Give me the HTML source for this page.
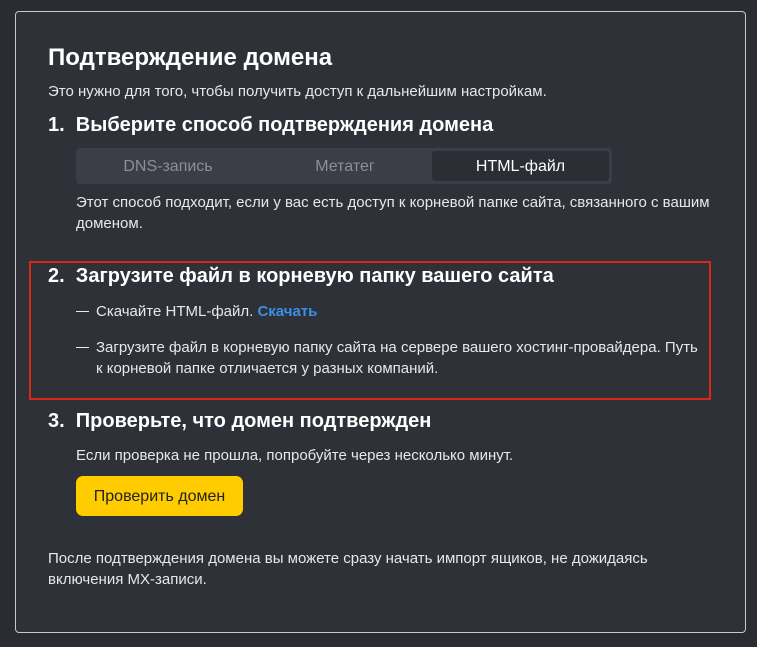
<!DOCTYPE html>
<html><head><meta charset="utf-8"><style>
*{margin:0;padding:0;box-sizing:border-box}
body{width:757px;height:647px;background:#2a2c31;font-family:"Liberation Sans",sans-serif;color:#fff;position:relative;overflow:hidden}
.card{position:absolute;left:15px;top:11px;width:731px;height:622px;border:1px solid #c8c9cc;border-radius:4px;background:#2f3138}
.a{position:absolute;white-space:nowrap}
.h1{font-size:24px;font-weight:bold}
.h2{font-size:20px;font-weight:bold}
.t{font-size:15px;color:#e8e8ea;line-height:21px}
.seg{position:absolute;left:76px;top:148px;width:536px;height:36px;background:#3b3e46;border-radius:4px}
.seg div{position:absolute;top:0;height:36px;line-height:37px;font-size:16px;color:#8c8f96;text-align:center}
.act{left:356px!important;top:3px!important;width:177px;height:30px!important;line-height:31px!important;background:#2c2e35;border-radius:3px;color:#fff!important}
.red{position:absolute;left:29px;top:261px;width:682px;height:139px;border:2px solid #d8281b}
.btn{position:absolute;left:76px;top:476px;width:167px;height:40px;background:#fc0;border-radius:7px;color:#222;font-size:16px;text-align:center;line-height:41px}
.d{display:inline-block;width:13px;height:1px;background:#e8e8ea;vertical-align:middle;margin-right:7px;position:relative;top:-1px}
</style></head><body>
<div class="card"></div>
<div class="a h1" style="left:48px;top:44px">Подтверждение домена</div>
<div class="a t" style="left:48px;top:81px">Это нужно для того, чтобы получить доступ к дальнейшим настройкам.</div>
<div class="a h2" style="left:48px;top:114px">1.&nbsp; Выберите способ подтверждения домена</div>
<div class="seg"><div style="left:0;width:184px">DNS-запись</div><div style="left:184px;width:170px">Метатег</div><div class="act">HTML-файл</div></div>
<div class="a t" style="left:76px;top:192px">Этот способ подходит, если у вас есть доступ к корневой папке сайта, связанного с вашим<br>доменом.</div>
<div class="red"></div>
<div class="a h2" style="left:48px;top:265px">2.&nbsp; Загрузите файл в корневую папку вашего сайта</div>
<div class="a t" style="left:76px;top:301px"><span class="d"></span>Скачайте HTML-файл. <span style="color:#3b8fe6;font-weight:bold">Скачать</span></div>
<div class="a t" style="left:76px;top:337px"><span class="d"></span></div>
<div class="a t" style="left:96px;top:337px">Загрузите файл в корневую папку сайта на сервере вашего хостинг-провайдера. Путь<br>к корневой папке отличается у разных компаний.</div>
<div class="a h2" style="left:48px;top:410px">3.&nbsp; Проверьте, что домен подтвержден</div>
<div class="a t" style="left:76px;top:445px">Если проверка не прошла, попробуйте через несколько минут.</div>
<div class="btn">Проверить домен</div>
<div class="a t" style="left:48px;top:548px">После подтверждения домена вы можете сразу начать импорт ящиков, не дожидаясь<br>включения MX-записи.</div>
</body></html>
